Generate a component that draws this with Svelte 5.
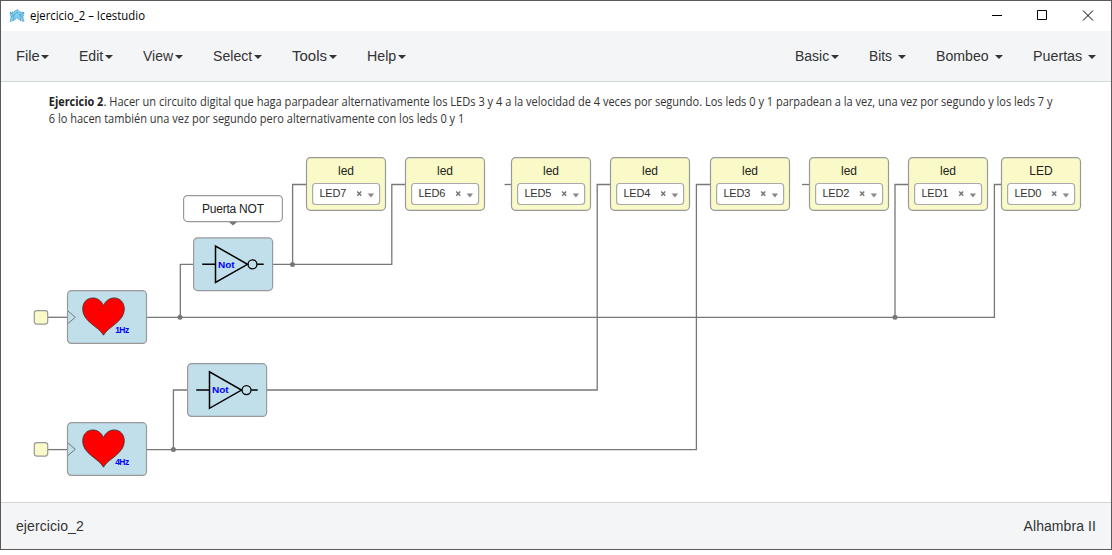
<script>
  const leftMenu = [
    { name: 'File', w: 33, t: 23.6 }, { name: 'Edit', w: 34, t: 24.2 }, { name: 'View', w: 40, t: 30 },
    { name: 'Select', w: 49, t: 39.2 }, { name: 'Tools', w: 45, t: 35 }, { name: 'Help', w: 39, t: 29.2 }
  ];
  const rightMenu = [
    { name: 'Basic', w: 44, t: 34.2 }, { name: 'Bits', w: 37, t: 23 },
    { name: 'Bombeo', w: 67, t: 52.6 }, { name: 'Puertas', w: 63, t: 49.2 }
  ];
  const leds = [
    { x: 306, n: 7 }, { x: 405, n: 6 }, { x: 511, n: 5 }, { x: 610, n: 4 },
    { x: 710, n: 3 }, { x: 809, n: 2 }, { x: 908, n: 1 }, { x: 1001, n: 0 }
  ];
  const hearts = [{ y: 290.7, label: '1Hz' }, { y: 422.7, label: '4Hz' }];
  const gates = [{ x: 193.2, y: 237.5 }, { x: 187.2, y: 363.3 }];
  const wires = [
    'M272 264.4H391.8V184.5H405', 'M292.6 264.4V184.5H306', 'M504.5 184.5H511',
    'M267 390H597.2V184.5H610', 'M146 449.6H696.4V184.5H710', 'M802 184.5H809',
    'M146 317.3H994.4V184.5H1001', 'M895 317.3V184.5H908',
    'M180.3 317.3V264.4H193', 'M173.4 449.6V390H187', 'M48 317.3H67', 'M48 449.6H67'
  ];
  const dots = [[292.5, 264.4], [180, 317.3], [895, 317.3], [173.4, 449.6]];
</script>

{#snippet menu(items)}
  {#each items as m}
    <button style:width="{m.w}px">
      <svg width={m.w} height="20">
        <text x="0" y="15" textLength={m.t} lengthAdjust="spacingAndGlyphs">{m.name}</text>
        <path d="M{m.w - 8} 9h8l-4 4z" />
      </svg>
    </button>
  {/each}
{/snippet}

<div class="window">
  <header>
    <svg class="logo" width="16" height="14" viewBox="0 0 16 14">
      <path d="M1 3.5 4.500 3 8 .5 11.500 3l3.500.5-1 4.500 1 4.500-3.500-1L8 9l-3.500 2.500-3.500 1L2 8z" fill="#7fd0f3" />
      <path d="M1 3.5 5 6l3-3 3 3 4-2.500M2 8l3-2-.5 5.500M14 8l-3-2 .5 5.500" fill="none" stroke="#4a9cc4" stroke-width=".7" />
      <path d="M1 3.5 4.500 3 8 .5 11.500 3l3.500.5-1 4.500 1 4.500-3.500-1L8 9l-3.500 2.500-3.500 1L2 8z" fill="none" stroke="#35718f" stroke-width=".8" stroke-dasharray="1 1" />
    </svg>
    <svg class="title" width="120" height="20"><text x="0" y="14" textLength="115" lengthAdjust="spacingAndGlyphs">ejercicio_2 – Icestudio</text></svg>
    <svg class="controls" width="104" height="12" fill="none" stroke="#000">
      <path d="M0 5.5h10M45.5.5h9v9h-9zM91 .5l10 10M101 .5l-10 10" />
    </svg>
  </header>
  <nav>
    <div class="group">{@render menu(leftMenu)}</div>
    <div class="group">{@render menu(rightMenu)}</div>
  </nav>
  <main>
    <svg class="canvas" width="1110" height="420" viewBox="1 82 1110 420">
      <g class="note">
        <text class="strong" x="48.8" y="106" textLength="54.5" lengthAdjust="spacingAndGlyphs">Ejercicio 2</text>
        <text x="103.5" y="106" textLength="471.5" lengthAdjust="spacingAndGlyphs">. Hacer un circuito digital que haga parpadear alternativamente los LEDs 3 y 4 a la velocidad</text>
        <text x="578" y="106" textLength="474.5" lengthAdjust="spacingAndGlyphs">de 4 veces por segundo. Los leds 0 y 1 parpadean a la vez, una vez por segundo y los leds 7 y</text>
        <text x="48.8" y="123" textLength="415.5" lengthAdjust="spacingAndGlyphs">6 lo hacen también una vez por segundo pero alternativamente con los leds 0 y 1</text>
      </g>

      <g class="wires">
        {#each wires as d}<path {d} />{/each}
      </g>
      {#each dots as [cx, cy]}<circle {cx} {cy} r="2.5" fill="#777" />{/each}

      {#each leds as led}
        <g transform="translate({led.x} 157)">
          <rect class="box io" x=".5" y=".7" width="79" height="52.6" rx="4" />
          <text class="name" x="40" y="18" text-anchor="middle">{led.n === 0 ? 'LED' : 'led'}</text>
          <rect class="select" x="6.6" y="26.5" width="67" height="21" rx="3" />
          <text class="pin" x="13.4" y="40" textLength="27">LED{led.n}</text>
          <path d="M51.2 34.5l4 4.2M55.2 34.5l-4 4.2" stroke="#777" stroke-width="1.5" />
          <path d="M61.7 36.5h6.4l-3.2 4z" fill="#888" />
        </g>
      {/each}

      {#each hearts as h}
        <g transform="translate(67 {h.y})">
          <rect class="box io" x="-32.7" y="20" width="13.4" height="13.4" rx="2.5" />
          <rect class="box code" x=".5" y="0" width="79" height="52.7" rx="4" />
          <path d="M1 20.3 8.3 26.6 1 32.8" fill="none" stroke="#777" />
          <path d="M36.5 44.5C32 36 15.7 31 15.7 18.5 15.7 4.5 32.5 3.8 36.5 15 40.5 3.8 57.3 4.5 57.3 18.5 57.3 31 41 36 36.5 44.5Z" fill="#f00" stroke="#333" stroke-width=".8" />
          <text class="hz" x="48.2" y="42.3" textLength="14">{h.label}</text>
        </g>
      {/each}

      {#each gates as g}
        <g transform="translate({g.x} {g.y})">
          <rect class="box code" x=".4" y=".4" width="79" height="52.7" rx="4" />
          <g fill="none" stroke="#000">
            <path d="M9 26.8H22M64 26.8H70.5" stroke-width="1.5" />
            <path d="M22.3 8.5V45L54.3 26.8Z" stroke-width="1.5" />
            <circle cx="59.3" cy="26.8" r="4.5" stroke-width="1.3" />
          </g>
          <text class="not" x="24.8" y="30" textLength="16.7" lengthAdjust="spacingAndGlyphs">Not</text>
        </g>
      {/each}

      <rect class="select comment" x="183.6" y="195.6" width="98.8" height="26" rx="4" />
      <path d="M229 222h8l-4 3.6z" fill="#777" />
      <text class="name" x="202" y="213" textLength="62">Puerta NOT</text>
    </svg>
  </main>
  <footer><span>ejercicio_2</span><span class="board">Alhambra II</span></footer>
</div>

<style>
  :global(body) { margin: 0; background: #fff; }
  .window {
    box-sizing: border-box; width: 1112px; height: 550px; border: 1px solid #5a5858;
    display: flex; flex-direction: column; background: #fff; overflow: hidden;
    font: 14px "Liberation Sans", Arial, sans-serif; color: #333;
  }
  svg { display: block; flex: none; }
  header { height: 30px; display: flex; align-items: center; padding: 0 15px 0 8px; }
  .title { margin-left: 5px; font: 12px "Open Sans", "Noto Sans", sans-serif; fill: #000; }
  .controls { margin-left: auto; }
  nav {
    height: 50px; display: flex; justify-content: space-between; align-items: center;
    padding: 0 15px; background: #f4f5f7; border-bottom: 1px solid #d1dbda;
  }
  .group { display: flex; gap: 30px; }
  button { border: 0; padding: 0; background: none; font: inherit; fill: #333; }
  main { height: 420px; }
  footer {
    height: 46px; display: flex; justify-content: space-between; align-items: center;
    padding: 0 15px; background: #f4f5f7; border-top: 1px solid #d2d6d8; letter-spacing: .08px;
  }
  .note { font: 12px "Open Sans", "Noto Sans", sans-serif; fill: #333; }
  .strong { font-weight: 700; fill: #222; }
  .wires { fill: none; stroke: #777; stroke-width: 1.3; }
  .box { stroke: #999; stroke-width: 1.2; }
  .io { fill: #fafac8; }
  .code { fill: #c0dfeb; }
  .select { fill: #fff; stroke: #aaa; stroke-width: 1.2; }
  .comment { stroke: #999; }
  .name { font-size: 12px; fill: #222; }
  .pin { font-size: 11px; fill: #333; }
  .hz { font-size: 8.5px; font-weight: 700; fill: #00f; }
  .not { font-size: 9.7px; font-weight: 700; fill: #00f; }
</style>
